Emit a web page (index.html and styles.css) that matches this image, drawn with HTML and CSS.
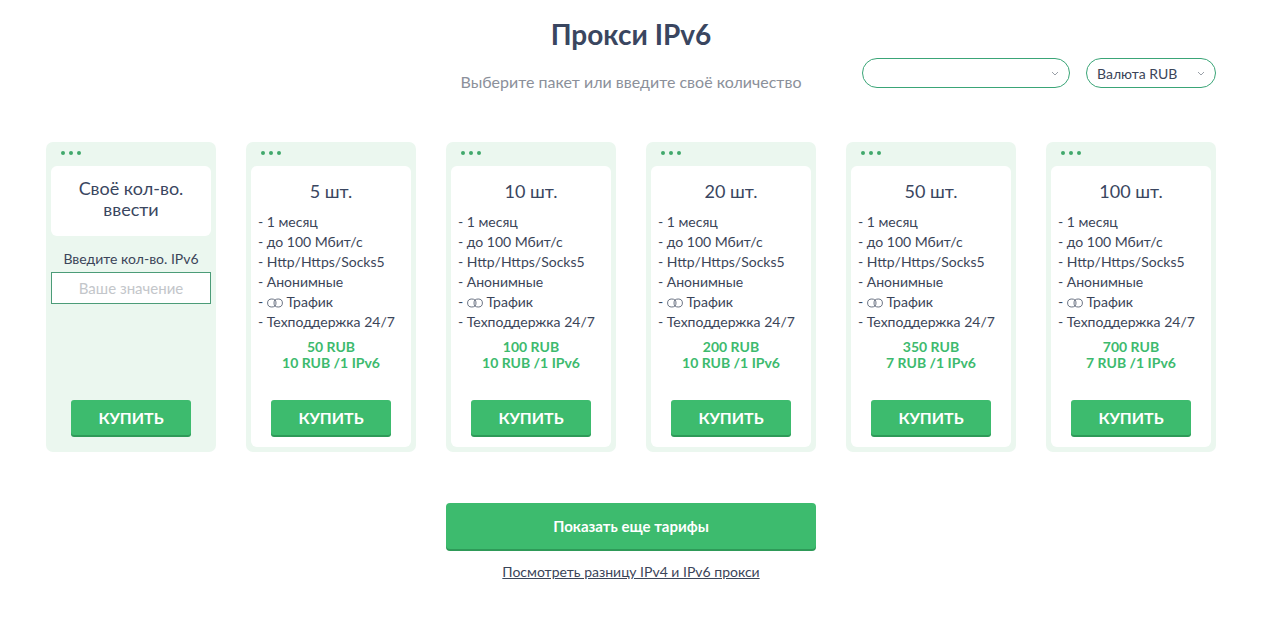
FILE: index.html
```html
<!DOCTYPE html>
<html lang="ru">
<head>
<meta charset="utf-8">
<title>Прокси IPv6</title>
<link rel="stylesheet" href="styles.css">
</head>
<body>
<div class="page">
  <header class="head">
    <h1 class="title">Прокси IPv6</h1>
    <div class="subrow">
      <div class="spacer"></div>
      <p class="subtitle">Выберите пакет или введите своё количество</p>
      <div class="selects">
        <div class="select select-wide"><span class="select-text"></span><svg class="chev" viewBox="0 0 8 5" width="8" height="5"><path d="M1 1l3 3 3-3" fill="none" stroke="#9aa0a8" stroke-width="1"/></svg></div>
        <div class="select select-cur"><span class="select-text">Валюта RUB</span><svg class="chev" viewBox="0 0 8 5" width="8" height="5"><path d="M1 1l3 3 3-3" fill="none" stroke="#9aa0a8" stroke-width="1"/></svg></div>
      </div>
    </div>
  </header>

  <section class="cards">
    <div class="card">
      <div class="dots"><i></i><i></i><i></i></div>
      <div class="inner inner-custom">
        <div class="qty qty-custom">Своё кол-во.<br>ввести</div>
      </div>
      <div class="custom-body">
        <div class="custom-label">Введите кол-во. IPv6</div>
        <input class="custom-input" type="text" placeholder="Ваше значение">
      </div>
      <div class="btn-wrap"><button class="buy">КУПИТЬ</button></div>
    </div>

    <div class="card">
      <div class="dots"><i></i><i></i><i></i></div>
      <div class="inner">
        <div class="qty">5 шт.</div>
        <ul class="features">
          <li>- 1 месяц</li><li>- до 100 Мбит/с</li><li>- Http/Https/Socks5</li><li>- Анонимные</li>
          <li>- <svg class="inf" viewBox="0 0 16 10" width="16" height="10"><ellipse cx="4.8" cy="5" rx="4.2" ry="4" fill="none" stroke="#5a6375" stroke-width="0.9"/><ellipse cx="11.2" cy="5" rx="4.2" ry="4" fill="none" stroke="#5a6375" stroke-width="0.9"/></svg> Трафик</li>
          <li>- Техподдержка 24/7</li>
        </ul>
        <div class="price">50 RUB<br>10 RUB /1 IPv6</div>
        <div class="btn-wrap"><button class="buy">КУПИТЬ</button></div>
      </div>
    </div>

    <div class="card">
      <div class="dots"><i></i><i></i><i></i></div>
      <div class="inner">
        <div class="qty">10 шт.</div>
        <ul class="features">
          <li>- 1 месяц</li><li>- до 100 Мбит/с</li><li>- Http/Https/Socks5</li><li>- Анонимные</li>
          <li>- <svg class="inf" viewBox="0 0 16 10" width="16" height="10"><ellipse cx="4.8" cy="5" rx="4.2" ry="4" fill="none" stroke="#5a6375" stroke-width="0.9"/><ellipse cx="11.2" cy="5" rx="4.2" ry="4" fill="none" stroke="#5a6375" stroke-width="0.9"/></svg> Трафик</li>
          <li>- Техподдержка 24/7</li>
        </ul>
        <div class="price">100 RUB<br>10 RUB /1 IPv6</div>
        <div class="btn-wrap"><button class="buy">КУПИТЬ</button></div>
      </div>
    </div>

    <div class="card">
      <div class="dots"><i></i><i></i><i></i></div>
      <div class="inner">
        <div class="qty">20 шт.</div>
        <ul class="features">
          <li>- 1 месяц</li><li>- до 100 Мбит/с</li><li>- Http/Https/Socks5</li><li>- Анонимные</li>
          <li>- <svg class="inf" viewBox="0 0 16 10" width="16" height="10"><ellipse cx="4.8" cy="5" rx="4.2" ry="4" fill="none" stroke="#5a6375" stroke-width="0.9"/><ellipse cx="11.2" cy="5" rx="4.2" ry="4" fill="none" stroke="#5a6375" stroke-width="0.9"/></svg> Трафик</li>
          <li>- Техподдержка 24/7</li>
        </ul>
        <div class="price">200 RUB<br>10 RUB /1 IPv6</div>
        <div class="btn-wrap"><button class="buy">КУПИТЬ</button></div>
      </div>
    </div>

    <div class="card">
      <div class="dots"><i></i><i></i><i></i></div>
      <div class="inner">
        <div class="qty">50 шт.</div>
        <ul class="features">
          <li>- 1 месяц</li><li>- до 100 Мбит/с</li><li>- Http/Https/Socks5</li><li>- Анонимные</li>
          <li>- <svg class="inf" viewBox="0 0 16 10" width="16" height="10"><ellipse cx="4.8" cy="5" rx="4.2" ry="4" fill="none" stroke="#5a6375" stroke-width="0.9"/><ellipse cx="11.2" cy="5" rx="4.2" ry="4" fill="none" stroke="#5a6375" stroke-width="0.9"/></svg> Трафик</li>
          <li>- Техподдержка 24/7</li>
        </ul>
        <div class="price">350 RUB<br>7 RUB /1 IPv6</div>
        <div class="btn-wrap"><button class="buy">КУПИТЬ</button></div>
      </div>
    </div>

    <div class="card">
      <div class="dots"><i></i><i></i><i></i></div>
      <div class="inner">
        <div class="qty">100 шт.</div>
        <ul class="features">
          <li>- 1 месяц</li><li>- до 100 Мбит/с</li><li>- Http/Https/Socks5</li><li>- Анонимные</li>
          <li>- <svg class="inf" viewBox="0 0 16 10" width="16" height="10"><ellipse cx="4.8" cy="5" rx="4.2" ry="4" fill="none" stroke="#5a6375" stroke-width="0.9"/><ellipse cx="11.2" cy="5" rx="4.2" ry="4" fill="none" stroke="#5a6375" stroke-width="0.9"/></svg> Трафик</li>
          <li>- Техподдержка 24/7</li>
        </ul>
        <div class="price">700 RUB<br>7 RUB /1 IPv6</div>
        <div class="btn-wrap"><button class="buy">КУПИТЬ</button></div>
      </div>
    </div>
  </section>

  <div class="more">
    <button class="more-btn">Показать еще тарифы</button>
    <a class="diff-link" href="#">Посмотреть разницу IPv4 и IPv6 прокси</a>
  </div>
</div>
</body>
</html>
```

FILE: styles.css
```css
* { box-sizing: border-box; }
html, body { margin: 0; padding: 0; background: #fff; }
body {
  font-family: Lato, "Noto Sans", "Liberation Sans", sans-serif;
  color: #3b4559;
}
.page {
  width: 1170px;
  margin-left: 46px;
}
.head { padding-top: 17px; }
.title {
  margin: 0;
  text-align: center;
  font-size: 28px;
  font-weight: 700;
  line-height: 34px;
  color: #3a4660;
}
.subrow {
  display: grid;
  grid-template-columns: 1fr auto 1fr;
  margin-top: 7px;
}
.subtitle {
  margin: 0;
  padding-top: 14px;
  font-size: 16px;
  line-height: 20px;
  color: #8b909a;
}
.selects {
  display: flex;
  justify-content: flex-end;
  gap: 16px;
}
.select {
  height: 30px;
  border: 1px solid #3aa577;
  border-radius: 15px;
  display: flex;
  align-items: center;
  justify-content: space-between;
  padding: 0 10px 0 10px;
}
.select-wide { width: 208px; }
.select-cur { width: 130px; }
.select-text { font-size: 14px; color: #3b4559; }
.chev { margin-top: 1px; }

.cards {
  display: flex;
  gap: 30px;
  margin-top: 50px;
}
.card {
  width: 170px;
  height: 310px;
  background: #ebf7ef;
  border-radius: 7px;
  padding: 0 5px 5px;
  display: flex;
  flex-direction: column;
}
.dots {
  display: flex;
  gap: 4px;
  padding: 9px 0 0 10px;
  height: 24px;
}
.dots i {
  width: 4px;
  height: 4px;
  border-radius: 50%;
  background: #41a86c;
}
.inner {
  background: #fff;
  border-radius: 6px;
  flex: 1;
  display: flex;
  flex-direction: column;
  padding: 14px 0 0;
}
.inner-custom {
  flex: none;
  height: 70px;
  padding-top: 12px;
}
.qty {
  text-align: center;
  font-size: 18px;
  line-height: 22px;
  color: #3a4660;
}
.qty-custom { line-height: 21px; }
.features {
  list-style: none;
  margin: 10px 0 0;
  padding: 0 0 0 7px;
  font-size: 14px;
  line-height: 20px;
  color: #3b4559;
}
.inf { vertical-align: -1px; }
.price {
  margin-top: 7px;
  text-align: center;
  font-size: 14px;
  font-weight: 700;
  line-height: 16px;
  color: #3dba6e;
}
.btn-wrap {
  margin-top: auto;
  padding-bottom: 12px;
  display: flex;
  justify-content: center;
}
.buy {
  width: 120px;
  height: 35px;
  border: none;
  border-radius: 3px;
  background: #3dbb6e;
  box-shadow: 0 2px 0 #2e9a58;
  color: #fff;
  font-family: Lato, "Noto Sans", sans-serif;
  font-size: 16px;
  font-weight: 700;
  padding: 0;
}
.custom-body {
  display: flex;
  flex-direction: column;
  align-items: center;
  padding-top: 14px;
}
.custom-label {
  font-size: 14px;
  line-height: 18px;
  color: #3b4559;
}
.custom-input {
  margin-top: 4px;
  width: 160px;
  height: 32px;
  border: 1px solid #4b9c78;
  background: #fff;
  font-family: Lato, "Noto Sans", sans-serif;
  font-size: 15px;
  text-align: center;
  padding: 0;
  outline: none;
}
.custom-input::placeholder { color: #c3c6ca; }

.more {
  display: flex;
  flex-direction: column;
  align-items: center;
  margin-top: 51px;
}
.more-btn {
  width: 370px;
  height: 46px;
  border: none;
  border-radius: 4px;
  background: #3dbb6e;
  box-shadow: 0 2px 0 #2e9a58;
  color: #fff;
  font-family: Lato, "Noto Sans", sans-serif;
  font-size: 15px;
  font-weight: 700;
}
.diff-link {
  margin-top: 14px;
  font-size: 14px;
  color: #3b4559;
  text-decoration: underline;
}
```
